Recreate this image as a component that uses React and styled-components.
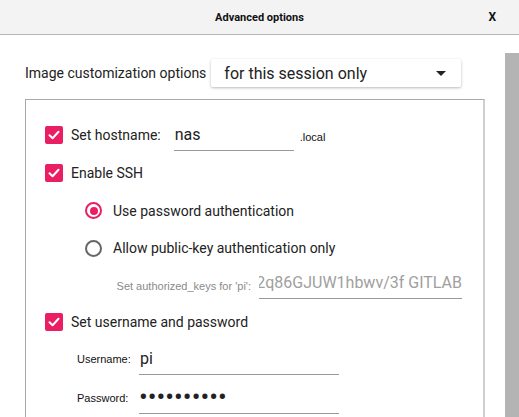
import React from 'react';
import styled, { createGlobalStyle } from 'styled-components';

const GlobalStyle = createGlobalStyle`
  html, body {
    margin: 0;
    padding: 0;
    background: #ffffff;
    overflow: hidden;
  }
  body {
    font-family: Roboto, "Noto Sans", sans-serif;
    color: #222222;
  }
`;

const PINK = '#e91e63';

const Window = styled.div`
  width: 519px;
  height: 417px;
  display: flex;
  flex-direction: column;
  overflow: hidden;
`;

const Header = styled.div`
  height: 34px;
  flex: none;
  display: flex;
  align-items: center;
  justify-content: center;
  position: relative;
  background: #f3f3f3;
  border-bottom: 1px solid #b5b5b5;
`;

const Title = styled.div`
  font-size: 11px;
  font-weight: 700;
  color: #111;
`;

const CloseButton = styled.div`
  position: absolute;
  right: 23px;
  top: 10px;
  font-size: 12px;
  font-weight: 700;
  color: #111;
  cursor: pointer;
`;

const Body = styled.div`
  flex: 1;
  display: flex;
  min-height: 0;
`;

const Content = styled.div`
  width: 505px;
  padding-left: 25px;
  box-sizing: border-box;
`;

const Scrollbar = styled.div`
  width: 14px;
  margin-top: 18px;
  background: #b4b4b4;
`;

const OptionsRow = styled.div`
  display: flex;
  align-items: center;
  height: 28px;
  margin-top: 24px;
  gap: 5px;
`;

const OptionsLabel = styled.span`
  font-size: 14px;
  color: #222;
`;

const Dropdown = styled.div`
  width: 250px;
  height: 28px;
  box-sizing: border-box;
  display: flex;
  align-items: center;
  justify-content: space-between;
  padding: 0 15px 0 13px;
  background: #fff;
  border-radius: 2px;
  box-shadow: 0 1px 3px rgba(0, 0, 0, 0.28);
  font-size: 16px;
  color: #222;
`;

const Arrow = styled.span`
  width: 0;
  height: 0;
  border-left: 5px solid transparent;
  border-right: 5px solid transparent;
  border-top: 5px solid #222;
`;

const Panel = styled.div`
  width: 460px;
  height: 340px;
  margin-top: 12px;
  box-sizing: border-box;
  border: 1px solid #a9a9a9;
  border-right: 2px solid #d0d0d0;
  padding-top: 16px;
`;

const Row = styled.div`
  display: flex;
  align-items: center;
  height: ${(p) => p.$h}px;
  padding-left: ${(p) => p.$indent}px;
`;

const Checkbox = styled.span`
  width: 18px;
  height: 18px;
  flex: none;
  border-radius: 2px;
  background: ${PINK};
  display: flex;
  align-items: center;
  justify-content: center;
  margin-right: 8px;
`;

const Radio = styled.span`
  width: 17px;
  height: 17px;
  flex: none;
  box-sizing: border-box;
  border-radius: 50%;
  border: 2px solid ${(p) => (p.$checked ? PINK : '#666')};
  display: flex;
  align-items: center;
  justify-content: center;
  margin-right: 11px;

  &::after {
    content: '';
    display: ${(p) => (p.$checked ? 'block' : 'none')};
    width: 8px;
    height: 8px;
    border-radius: 50%;
    background: ${PINK};
  }
`;

const Label = styled.span`
  font-size: 14px;
  color: #222;
  white-space: nowrap;
`;

const SmallLabel = styled.span`
  font-family: "Liberation Sans", Arial, sans-serif;
  font-size: 11px;
  color: ${(p) => (p.$muted ? '#8a8a8a' : '#111')};
  white-space: nowrap;
  width: ${(p) => (p.$w ? `${p.$w}px` : 'auto')};
  text-align: ${(p) => p.$align || 'left'};
  flex: none;
`;

const LineInput = styled.input`
  width: ${(p) => p.$w}px;
  height: 28px;
  box-sizing: border-box;
  border: none;
  border-bottom: 1px solid #9a9a9a;
  outline: none;
  padding: 0 0 4px 1px;
  margin-top: 4px;
  font-family: Roboto, sans-serif;
  font-size: 16px;
  color: #222;
  background: transparent;
  flex: none;
`;

const PasswordInput = styled(LineInput)`
  font-size: 26px;
  letter-spacing: 0;
  padding: 0 0 6px 0;
`;

const KeyField = styled.div`
  width: 203px;
  height: 28px;
  margin-top: -1px;
  box-sizing: border-box;
  border-bottom: 1px solid #9a9a9a;
  overflow: hidden;
  display: flex;
  justify-content: flex-end;
  align-items: center;
  padding-bottom: 4px;
  font-size: 16px;
  color: #a0a0a0;
  white-space: nowrap;
  flex: none;
`;

const CheckMark = () => (
  <svg width="12" height="10" viewBox="0 0 12 10">
    <path
      d="M1.5 5.2 L4.6 8.2 L10.5 1.8"
      fill="none"
      stroke="#fff"
      strokeWidth="2"
      strokeLinecap="round"
      strokeLinejoin="round"
    />
  </svg>
);

const App = () => {
  return (
    <>
      <GlobalStyle />
      <Window>
        <Header>
          <Title>Advanced options</Title>
          <CloseButton>X</CloseButton>
        </Header>
        <Body>
          <Content>
            <OptionsRow>
              <OptionsLabel>Image customization options</OptionsLabel>
              <Dropdown>
                <span>for this session only</span>
                <Arrow />
              </Dropdown>
            </OptionsRow>
            <Panel>
              <Row $h={38} $indent={19}>
                <Checkbox>
                  <CheckMark />
                </Checkbox>
                <Label>Set hostname:</Label>
                <LineInput $w={120} style={{ marginLeft: 13 }} defaultValue="nas" />
                <SmallLabel style={{ marginLeft: 6, marginTop: 4 }}>.local</SmallLabel>
              </Row>
              <Row $h={38} $indent={19}>
                <Checkbox>
                  <CheckMark />
                </Checkbox>
                <Label>Enable SSH</Label>
              </Row>
              <Row $h={37} $indent={59}>
                <Radio $checked />
                <Label>Use password authentication</Label>
              </Row>
              <Row $h={38} $indent={59}>
                <Radio />
                <Label>Allow public-key authentication only</Label>
              </Row>
              <Row $h={37} $indent={19}>
                <SmallLabel $muted $w={206} $align="right">
                  Set authorized_keys for 'pi':
                </SmallLabel>
                <KeyField style={{ marginLeft: 8 }}>2q86GJUW1hbwv/3f GITLAB</KeyField>
              </Row>
              <Row $h={36} $indent={19}>
                <Checkbox>
                  <CheckMark />
                </Checkbox>
                <Label>Set username and password</Label>
              </Row>
              <Row $h={38} $indent={51}>
                <SmallLabel $w={62}>Username:</SmallLabel>
                <LineInput $w={200} defaultValue="pi" />
              </Row>
              <Row $h={40} $indent={51}>
                <SmallLabel $w={62}>Password:</SmallLabel>
                <PasswordInput $w={200} type="password" defaultValue="raspberry1" />
              </Row>
            </Panel>
          </Content>
          <Scrollbar />
        </Body>
      </Window>
    </>
  );
};

export default App;
